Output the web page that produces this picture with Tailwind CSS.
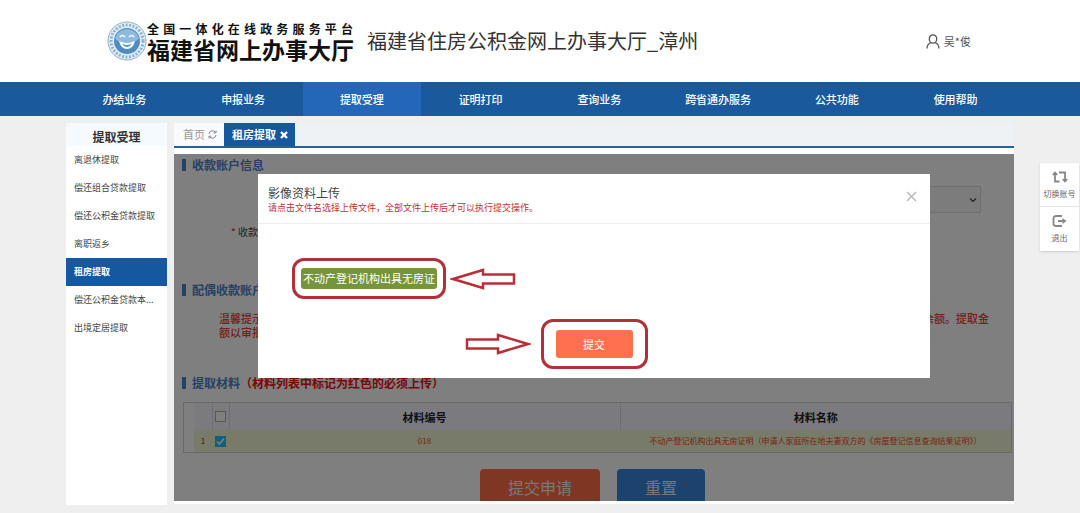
<!DOCTYPE html>
<html lang="zh-CN">
<head>
    <meta charset="UTF-8">
    <meta name="viewport" content="width=device-width, initial-scale=1.0">
    <title>福建省住房公积金网上办事大厅_漳州</title>
    <script src="https://cdn.jsdelivr.net/npm/@tailwindcss/browser@4"></script>
</head>
<body class="bg-[#efefef] text-[#444] font-['Noto_Sans_CJK_SC',sans-serif] overflow-hidden">
    <!-- header -->
    <header class="bg-white h-[82px] pl-[107px] pr-[109px] flex items-center">
        <svg class="w-10 h-10 shrink-0" viewBox="0 0 40 40" fill="none" aria-hidden="true">
            <circle cx="20" cy="20" r="19" fill="#e3eef6" stroke="#8fb0c9"/>
            <circle cx="20" cy="20" r="16" stroke="#8fb2cd" stroke-width="3" stroke-dasharray="2 1.5"/>
            <circle cx="20" cy="20" r="13" fill="#4f8cc0"/>
            <path d="M8 17a12.500 12.500 0 0 1 24 0c-3 6-20 8-24 0z" fill="#8dbade"/>
            <path d="M13 16q2-3 5 0M22 16q3-3 5 0" stroke="#fff" stroke-width="1.500"/>
            <path d="M12 20q8 4 16 0q-2 8-8 8t-8-8z" fill="#fff"/>
            <path d="M15 23q5 2 10 0q-2 3-5 3t-5-3z" fill="#4f8cc0"/>
        </svg>
        <div class="w-[206px] shrink-0 text-[#111]">
            <p class="text-[12px] leading-[16px] font-bold [text-align-last:justify]">全国一体化在线政务服务平台</p>
            <p class="text-[23px] leading-[24px] font-bold whitespace-nowrap">福建省网上办事大厅</p>
        </div>
        <h1 class="ml-[14px] text-[20px] leading-[24px] text-[#333] whitespace-nowrap">福建省住房公积金网上办事大厅_漳州</h1>
        <a href="#" class="ml-auto flex items-center gap-1 text-[11px] leading-[16px] text-[#555] whitespace-nowrap">
            <svg class="w-[14px] h-[15px]" viewBox="0 0 14 15" fill="none" stroke="#555" stroke-width="1.300" aria-hidden="true">
                <ellipse cx="7" cy="5" rx="3.700" ry="4.200"/>
                <path d="M1 14.500c0-3 1.500-5 4-6M13 14.500c0-3-1.500-5-4-6"/>
            </svg>
            吴*俊
        </a>
    </header>

    <!-- main nav -->
    <nav class="bg-[#1a5a9c] px-[65px] h-[34px] grid grid-cols-8 text-center text-[11px] leading-[34px] font-medium text-white">
        <a href="#">办结业务</a>
        <a href="#">申报业务</a>
        <a href="#" class="bg-[#2467b8]">提取受理</a>
        <a href="#">证明打印</a>
        <a href="#">查询业务</a>
        <a href="#">跨省通办服务</a>
        <a href="#">公共功能</a>
        <a href="#">使用帮助</a>
    </nav>

    <div class="px-[66px] pt-[7px] flex items-start gap-[7px]">
        <!-- sidebar -->
        <aside class="w-[101px] min-h-[382px] shrink-0 bg-white">
            <h2 class="h-[23px] pt-[5px] bg-[#f5faff] text-center text-[12px] leading-[18px] font-bold text-[#333]">提取受理</h2>
            <ul class="text-[9px] leading-[28px] text-[#444] whitespace-nowrap">
                <li><a href="#" class="block px-2">离退休提取</a></li>
                <li><a href="#" class="block px-2">偿还组合贷款提取</a></li>
                <li><a href="#" class="block px-2">偿还公积金贷款提取</a></li>
                <li><a href="#" class="block px-2">离职返乡</a></li>
                <li><a href="#" class="block px-2 bg-[#1558a0] font-bold text-white">租房提取</a></li>
                <li><a href="#" class="block px-2">偿还公积金贷款本...</a></li>
                <li><a href="#" class="block px-2">出境定居提取</a></li>
            </ul>
        </aside>

        <main class="flex-1 min-w-0 bg-white pb-[3px]">
            <!-- tabs -->
            <div class="flex bg-[#eff2f5] border-b-2 border-[#2d5f91] text-[11px] leading-[23px]">
                <a href="#" class="w-[50px] pl-[9px] flex items-center gap-[3px] bg-[#f8fafb] text-[#999]">
                    首页
                    <svg class="w-[9px] h-[9px]" viewBox="0 0 9 9" fill="none" stroke="#888" aria-hidden="true">
                        <path d="M1 4a3.500 3.500 0 0 1 6.500-1.500M8 5a3.500 3.500 0 0 1-6.500 1.500M8 .5v2.300H5.700M1 8.500V6.200h2.300"/>
                    </svg>
                </a>
                <a href="#" class="w-[71px] pl-2 flex items-center gap-1 bg-[#1558a0] font-bold text-white">
                    租房提取
                    <svg class="w-2 h-2" viewBox="0 0 8 8" stroke="#fff" stroke-width="2.400" aria-hidden="true"><path d="M1 1l6 6M7 1L1 7"/></svg>
                </a>
            </div>

            <div class="relative mt-[6px] overflow-hidden">
                <!-- form -->
                <form class="px-2" onsubmit="return false">
                    <h3 class="pt-[2px] flex items-center gap-[6px] text-[12px] leading-[18px] font-bold text-[#4a82cc]"><span class="w-1 h-3 bg-[#4a82cc]"></span>收款账户信息</h3>
                    <div class="mt-3 pr-[25px] flex justify-end">
                        <div class="relative">
                            <select aria-label="收款银行" class="appearance-none block w-[400px] h-[27px] bg-[#f8f8f8] border border-[#dcdcdc]"><option></option></select>
                            <svg class="absolute right-1 top-[10px] w-2 h-2" viewBox="0 0 8 8" fill="none" stroke="#444" stroke-width="1.200" aria-hidden="true"><path d="M1 2.500l3 3 3-3"/></svg>
                        </div>
                    </div>
                    <p class="mt-[11px] ml-[49px] text-[10px] leading-[16px]"><span class="text-[#f00000]">*</span> 收款账户</p>
                    <h3 class="mt-[41px] flex items-center gap-[6px] text-[12px] leading-[18px] font-bold text-[#4a82cc]"><span class="w-1 h-3 bg-[#4a82cc]"></span>配偶收款账户信息</h3>
                    <p class="mt-3 ml-[37px] mr-[17px] text-[11px] leading-[14px] font-medium text-[#f03a3a]">温馨提示：提取申请提交后，请耐心等待审核，审核结果可在办结业务中查询，提取金额到账后请及时核对本人银行账户及住房公积金个人账户的余额。提取金额以审批结果为准。</p>
                    <h3 class="mt-[35px] flex items-center gap-[6px] text-[12px] leading-[18px] font-bold text-[#4a82cc]"><span class="w-1 h-3 bg-[#4a82cc]"></span><span>提取材料<span class="text-[#f01010]">（材料列表中标记为红色的必须上传）</span></span></h3>

                    <div class="mt-[10px] -mr-[6px] pl-[10px] ml-px border border-[#d2d2da]">
                        <table class="w-full table-fixed text-center">
                            <thead class="bg-[#f6f6ff] text-[11px] leading-[16px] text-[#222]">
                                <tr class="h-[27px]">
                                    <th class="w-[18px] border-r border-[#dcdce4]"></th>
                                    <th class="w-[17px] border-r border-[#dcdce4]"><input type="checkbox" aria-label="全选" class="appearance-none block mx-auto w-[11px] h-[11px] bg-white border border-[#b0b0b0]"></th>
                                    <th class="border-r border-[#dcdce4] font-bold">材料编号</th>
                                    <th class="font-bold">材料名称</th>
                                </tr>
                            </thead>
                            <tbody class="bg-[#f0f6d2] text-[8px] leading-[12px] text-[#f04a28]">
                                <tr class="h-[22px]">
                                    <td class="text-[#444]">1</td>
                                    <td>
                                        <span class="grid place-items-center">
                                            <input type="checkbox" checked aria-label="选择材料 018" class="col-start-1 row-start-1 appearance-none w-[11px] h-[11px] bg-[#1ec0ff]">
                                            <svg class="col-start-1 row-start-1 w-[9px] h-[9px] pointer-events-none" viewBox="0 0 9 9" fill="none" stroke="#fff" stroke-width="1.600" aria-hidden="true"><path d="M1 4.500l2.500 2.500L8 1.500"/></svg>
                                        </span>
                                    </td>
                                    <td>018</td>
                                    <td class="whitespace-nowrap">不动产登记机构出具无房证明（申请人家庭所在地夫妻双方的《房屋登记信息查询结果证明》）</td>
                                </tr>
                            </tbody>
                        </table>
                    </div>

                    <div class="mt-[16px] -mb-1 pr-[3px] flex justify-center gap-[17px] text-[16px] leading-[36px] text-[#eee]">
                        <button type="submit" class="w-[120px] h-[36px] rounded bg-[#ff6e48]">提交申请</button>
                        <button type="reset" class="w-[88px] h-[36px] rounded bg-[#3884dc]">重置</button>
                    </div>
                </form>

                <div class="absolute inset-0 bg-black/50"></div>

                <!-- upload dialog -->
                <section role="dialog" aria-labelledby="dialog-title" class="absolute top-5 left-[10%] right-[10%] bg-white pb-[9px]">
                    <div class="h-[50px] px-[10px] pt-[11px] flex justify-between border-b border-[#eee]">
                        <div>
                            <h2 id="dialog-title" class="text-[12px] leading-[16px] text-[#444]">影像资料上传</h2>
                            <p class="text-[9px] leading-[14px] text-[#c03030]">请点击文件名选择上传文件，全部文件上传后才可以执行提交操作。</p>
                        </div>
                        <button type="button" aria-label="关闭" class="self-start mt-[6px] mr-[3px]">
                            <svg class="w-[11px] h-[11px]" viewBox="0 0 11 11" stroke="#bbb" stroke-width="1.500" aria-hidden="true"><path d="M1 1l9 9M10 1L1 10"/></svg>
                        </button>
                    </div>
                    <div class="pt-[34px] pl-[34px] flex items-center gap-1">
                        <div class="px-[6px] py-[7px] border-[3px] border-[#b2303a] rounded-[12px]">
                            <button type="button" class="block h-[21px] w-[136px] rounded-[3px] bg-[#76943c] text-[11px] leading-[21px] text-white whitespace-nowrap">不动产登记机构出具无房证</button>
                        </div>
                        <svg class="w-[66px] h-[22px]" viewBox="0 0 66 22" fill="#fff" stroke="#b82f38" stroke-width="2.500" aria-hidden="true"><path d="M3 11L33 2V6.500H64V15.500H33V20Z"/></svg>
                    </div>
                    <div class="mt-[20px] flex justify-center">
                        <div class="relative p-2 px-3 border-[3px] border-[#b2303a] rounded-[12px]">
                            <svg class="absolute right-full top-[11px] mr-[13px] w-[66px] h-[22px]" viewBox="0 0 66 22" fill="#fff" stroke="#b82f38" stroke-width="2.500" aria-hidden="true"><path d="M63 11L33 2V6.500H2V15.500H33V20Z"/></svg>
                            <button type="button" class="block h-[28px] w-[77px] rounded-[3px] bg-[#ff7050] text-[11px] leading-[28px] text-white">提交</button>
                        </div>
                    </div>
                </section>
            </div>
        </main>
    </div>

    <!-- floating account tools -->
    <div class="absolute right-px top-[163px] w-[39px] bg-white shadow-sm text-[8px] leading-[12px] text-[#666] text-center whitespace-nowrap">
        <a href="#" class="h-[44px] pt-2 flex flex-col items-center gap-[5px] border-b border-[#e5e5e5]">
            <svg class="w-4 h-3 shrink-0" viewBox="0 0 16 12" fill="none" stroke="#888" stroke-width="1.800" aria-hidden="true">
                <path d="M3 2V10.500H7.500M7 1.500H13V10M.8 4L3 1.500L5.200 4M10.800 8L13 10.500L15.200 8"/>
            </svg>
            切换账号
        </a>
        <a href="#" class="h-[44px] pt-2 flex flex-col items-center gap-[5px]">
            <svg class="w-[15px] h-3 shrink-0" viewBox="0 0 15 12" fill="none" stroke="#888" stroke-width="1.800" aria-hidden="true">
                <path d="M10 1H4.500Q1.500 1 1.500 3V9Q1.500 11 4.500 11H10M6 6H12"/>
                <path d="M10.500 3L14.500 6L10.500 9Z" fill="#888" stroke="none"/>
            </svg>
            退出
        </a>
    </div>
</body>
</html>
